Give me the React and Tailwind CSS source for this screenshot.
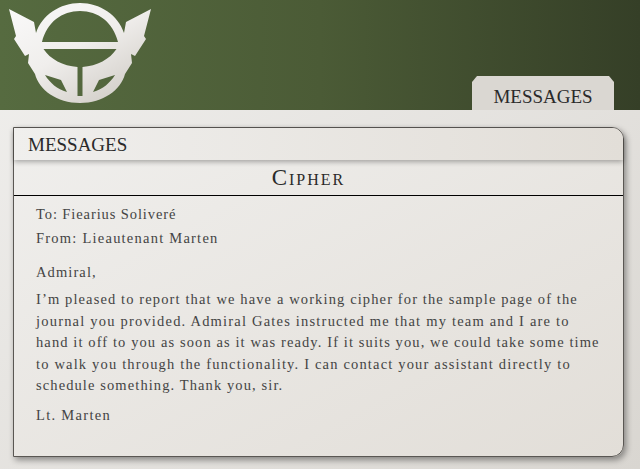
const Logo = () => (
  <svg width="160" height="106" viewBox="0 0 160 106" className="shrink-0">
    <defs>
      <linearGradient id="logoFill" x1="0" y1="0" x2="0.8" y2="1">
        <stop offset="0" stopColor="#fafafa" />
        <stop offset="0.5" stopColor="#f0eeec" />
        <stop offset="1" stopColor="#d0ccc6" />
      </linearGradient>
    </defs>
    <path
      fill="url(#logoFill)"
      fillRule="evenodd"
      d="M80 2 C100 2 118 14 124 32 L126 21 L151 8 L144 35 L146 38 L135 55 L131 53 L132 62 L125 73 C121 89 103 102 80 102 C57 102 39 89 35 73 L28 62 L29 53 L25 55 L14 38 L16 35 L9 8 L34 21 L36 32 C42 14 60 2 80 2 Z
         M42 41 C47 21 62 10 80 10 C98 10 113 21 118 41 Z
         M43.500 48 L116.500 48 C110 58 97 65 82.500 66 L82.500 95 L77.500 95 L77.500 66 C63 65 50 58 43.500 48 Z
         M45 74 L61 79 L67 91 C57 88 50 82 45 74 Z
         M115 74 L99 79 L93 91 C103 88 110 82 115 74 Z"
    />
  </svg>
);

const serif = "font-['Liberation_Serif',serif]";

export default function App() {
  return (
    <div className={`w-[640px] h-[469px] overflow-hidden flex flex-col ${serif} bg-gradient-to-br from-[#f1f0ee] to-[#d9d6d1]`}>
      {/* Top banner */}
      <div className="h-[110px] shrink-0 flex items-end justify-between pr-[26px] bg-gradient-to-r from-[#566b40] via-[#4b5b36] to-[#353f27]">
        <div className="self-start pt-[1px]">
          <Logo />
        </div>
        <div className="w-[142px] h-[34px] pt-[6px] flex items-center justify-center text-[19px] leading-none text-[#2a2a2a] bg-[#dad7d2] [clip-path:polygon(5px_0,137px_0,142px_6px,142px_100%,0_100%,0_6px)]">
          MESSAGES
        </div>
      </div>

      {/* Message panel */}
      <div className="flex-1 pt-[17px] pl-[13px] pr-[16px] pb-[12px]">
        <div className="h-full flex flex-col border border-[#5a5753] rounded-tr-[12px] rounded-br-[12px] shadow-[2px_3px_6px_rgba(0,0,0,0.4)] bg-gradient-to-br from-[#f0efed] to-[#e2ded8]">
          <div className="h-[32px] shrink-0 flex items-center pl-[14px] text-[19px] leading-none text-[#2a2a2a] rounded-tr-[11px] bg-gradient-to-r from-[#f0efed] to-[#e2ded8] shadow-[0_2px_5px_rgba(0,0,0,0.3)]">
            MESSAGES
          </div>
          <div className="h-[36px] shrink-0 pr-[20px] flex items-center justify-center border-b border-black text-[23px] tracking-[2px] leading-none text-[#2a2a2a] [font-variant-caps:small-caps]">
            Cipher
          </div>
          <div className="pt-[7px] pl-[22px] text-[14.500px] tracking-[1.1px] text-[#444]">
            <p className="leading-[22px] mb-[2px] tracking-[0.9px]">To: Fiearius Soliveré</p>
            <p className="leading-[22px] tracking-[1.23px]">From: Lieautenant Marten</p>
            <p className="leading-[22px] mt-[12px]">Admiral,</p>
            <div className="leading-[21.500px] mt-[6px] whitespace-nowrap">
              <p className="tracking-[1.12px]">I’m pleased to report that we have a working cipher for the sample page of the</p>
              <p className="tracking-[1.2px]">journal you provided. Admiral Gates instructed me that my team and I are to</p>
              <p className="tracking-[1.1px]">hand it off to you as soon as it was ready. If it suits you, we could take some time</p>
              <p className="tracking-[1.17px]">to walk you through the functionality. I can contact your assistant directly to</p>
              <p>schedule something. Thank you, sir.</p>
            </div>
            <p className="leading-[22px] mt-[7px] tracking-[1.3px]">Lt. Marten</p>
          </div>
        </div>
      </div>
    </div>
  );
}
